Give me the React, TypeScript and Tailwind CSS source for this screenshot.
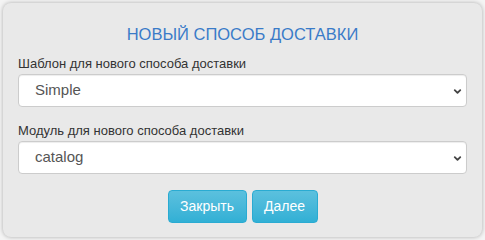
import { ChevronDown } from "lucide-react";

function Field({ label, value }: { label: string; value: string }) {
  return (
    <div className="flex flex-col">
      <label className="mb-[2px] text-[13px] leading-[16px] text-[#333]">{label}</label>
      <div className="relative flex h-[33px] items-center rounded-[4px] border border-[#ccc] bg-white pl-[16px] shadow-[inset_0_1px_1px_rgba(0,0,0,0.075)]">
        <span className="text-[15px] text-[#555]">{value}</span>
        <ChevronDown className="absolute right-[3px] top-[11px] h-[11px] w-[11px] text-[#444]" strokeWidth={4} />
      </div>
    </div>
  );
}

export default function App() {
  return (
    <div className="h-[240px] w-[485px] bg-[#f4f4f4] p-[3px] font-['Liberation_Sans',Arial,sans-serif]">
      <div className="flex h-[234px] flex-col rounded-[8px] bg-[#e9e9e9] px-[15px] pt-[21px] shadow-[0_0_4px_rgba(0,0,0,0.3)]">
        <h1 className="text-center text-[16.5px] leading-[20px] text-[#3a7bc8]">НОВЫЙ СПОСОБ ДОСТАВКИ</h1>
        <div className="mt-[12px] flex flex-col gap-[16px]">
          <Field label="Шаблон для нового способа доставки" value="Simple" />
          <Field label="Модуль для нового способа доставки" value="catalog" />
        </div>
        <div className="mt-[16px] flex justify-center gap-[5px]">
          <button className="h-[33px] w-[79px] rounded-[4px] border border-[#2aabd2] bg-gradient-to-b from-[#5bc0de] to-[#31b0d5] text-[14px] text-white">
            Закрыть
          </button>
          <button className="h-[33px] w-[66px] rounded-[4px] border border-[#2aabd2] bg-gradient-to-b from-[#5bc0de] to-[#31b0d5] text-[14px] text-white">
            Далее
          </button>
        </div>
      </div>
    </div>
  );
}
